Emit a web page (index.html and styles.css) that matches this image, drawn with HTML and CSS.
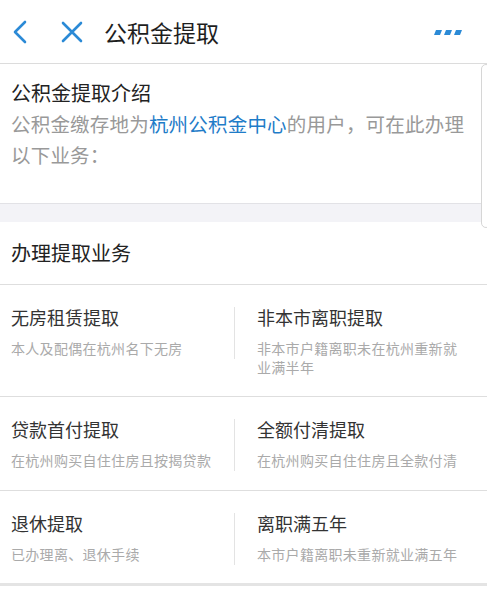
FILE: index.html
```html
<!DOCTYPE html>
<html lang="zh-CN">
<head>
<meta charset="utf-8">
<link rel="stylesheet" href="styles.css">
</head>
<body>
<div class="page">
  <header class="nav">
    <svg class="nav-back" width="20" height="24" viewBox="0 0 20 24"><path d="M15 2 L5 12 L15 22" fill="none" stroke="#2b8ad6" stroke-width="2.6" stroke-linecap="round" stroke-linejoin="round"/></svg>
    <svg class="nav-close" width="24" height="24" viewBox="0 0 24 24"><path d="M3 3 L21 21 M21 3 L3 21" fill="none" stroke="#2b8ad6" stroke-width="2.6" stroke-linecap="round"/></svg>
    <h1 class="nav-title">公积金提取</h1>
    <svg class="nav-more" width="30" height="8" viewBox="0 0 30 8"><path d="M2 1h6l-2 5h-6z M12 1h6l-2 5h-6z M22 1h6l-2 5h-6z" fill="#2b8ad6"/></svg>
  </header>

  <section class="intro">
    <h2 class="intro-title">公积金提取介绍</h2>
    <p class="intro-text">公积金缴存地为<span class="link">杭州公积金中心</span>的用户，可在此办理以下业务：</p>
  </section>

  <div class="gap"></div>

  <section class="biz">
    <h2 class="biz-title">办理提取业务</h2>
    <div class="row">
      <div class="cell">
        <div class="cell-title">无房租赁提取</div>
        <div class="cell-sub">本人及配偶在杭州名下无房</div>
      </div>
      <div class="divider"></div>
      <div class="cell">
        <div class="cell-title">非本市离职提取</div>
        <div class="cell-sub">非本市户籍离职未在杭州重新就业满半年</div>
      </div>
    </div>
    <div class="row">
      <div class="cell">
        <div class="cell-title">贷款首付提取</div>
        <div class="cell-sub">在杭州购买自住住房且按揭贷款</div>
      </div>
      <div class="divider"></div>
      <div class="cell">
        <div class="cell-title">全额付清提取</div>
        <div class="cell-sub">在杭州购买自住住房且全款付清</div>
      </div>
    </div>
    <div class="row last">
      <div class="cell">
        <div class="cell-title">退休提取</div>
        <div class="cell-sub">已办理离、退休手续</div>
      </div>
      <div class="divider"></div>
      <div class="cell">
        <div class="cell-title">离职满五年</div>
        <div class="cell-sub">本市户籍离职未重新就业满五年</div>
      </div>
    </div>
  </section>

  <section class="next">
    <h2 class="next-title">其他提取业务办理指南</h2>
  </section>

  <div class="scroll-hint"></div>
</div>
</body>
</html>
```

FILE: styles.css
```css
* { box-sizing: border-box; margin: 0; padding: 0; }
html, body { background: #fff; }
body {
  font-family: "Noto Sans CJK SC", "Noto Sans", sans-serif;
  color: #222;
  width: 487px;
  height: 605px;
  overflow: hidden;
}
.page { position: relative; }

.nav {
  height: 64px;
  display: flex;
  align-items: center;
  border-bottom: 1px solid #dcdcdc;
  padding-left: 10px;
}
.nav-back { margin-right: 30px; margin-top: 1px; }
.nav-close { margin-right: 20px; }
.nav-title {
  font-size: 23px;
  font-weight: 400;
  color: #1e1e1e;
  flex: 1;
  line-height: 30px;
}
.nav-more { margin-right: 23px; margin-top: 2px; }

.intro {
  padding: 14px 11px 0;
  height: 140px;
  border-bottom: 1px solid #e2e2e6;
}
.intro-title {
  font-size: 20px;
  font-weight: 400;
  color: #222;
  line-height: 30px;
}
.intro-text {
  font-size: 19.5px;
  line-height: 31px;
  color: #999;
  letter-spacing: 0.2px;
}
.link { color: #1f7cc8; }

.gap { height: 18px; background: #f3f3f7; }

.biz-title {
  font-size: 20px;
  font-weight: 400;
  color: #222;
  height: 63px;
  line-height: 62px;
  padding-left: 11px;
  border-bottom: 1px solid #dedede;
}

.row {
  display: grid;
  grid-template-columns: 234px 1px 1fr;
  padding: 20px 0 19px;
  border-bottom: 1px solid #dedede;
}
.row:first-of-type { padding-bottom: 19px; }
.row.last { border-bottom: 3px solid #e4e4e4; padding-bottom: 18px; }
.cell { padding-left: 11px; }
.cell + .divider + .cell { padding-left: 22px; padding-right: 18px; }
.divider {
  background: #e3e3e3;
  height: 52px;
  margin-top: 2px;
}
.cell-title {
  font-size: 18px;
  line-height: 24px;
  color: #333;
}
.cell-sub {
  margin-top: 10px;
  font-size: 14px;
  line-height: 19px;
  color: #aaa;
  letter-spacing: 0.3px;
}

.next { padding: 14px 11px; }
.next-title {
  font-size: 20px;
  font-weight: 400;
  color: #ddd;
  line-height: 30px;
}

.scroll-hint {
  position: absolute;
  right: -4px;
  top: 64px;
  width: 10px;
  height: 164px;
  border: 1px solid #d6d6d6;
  border-radius: 6px;
  background: #fff;
}
```
